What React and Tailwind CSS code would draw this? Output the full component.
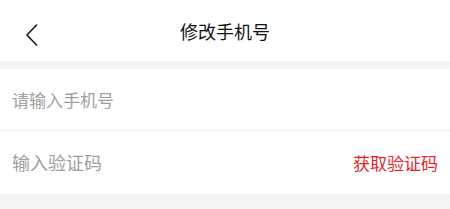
export default function App() {
  const font = { fontFamily: '"Noto Sans CJK SC", "Noto Sans", sans-serif' };
  return (
    <div className="w-[450px] h-[209px] bg-[#f5f5f5] flex flex-col" style={font}>
      <header className="h-[61px] bg-white flex items-center relative">
        <button className="absolute left-[22px] top-[20px] w-[20px] h-[30px] flex items-center justify-center">
          <svg width="14" height="24" viewBox="0 0 14 24" fill="none">
            <path d="M12 1.5 L2 12 L12 22.5" stroke="#111" strokeWidth="1.5" />
          </svg>
        </button>
        <h1 className="flex-1 text-center text-[18px] leading-none text-[#111] font-normal">修改手机号</h1>
      </header>
      <div className="mt-[8px] bg-white flex flex-col">
        <div className="h-[62px] flex items-center px-[12px] border-b border-[#eeeeee]">
          <span className="text-[17px] text-[#a0a0a0]">请输入手机号</span>
        </div>
        <div className="h-[63px] flex items-center justify-between px-[12px]">
          <span className="text-[18px] text-[#a0a0a0]">输入验证码</span>
          <span className="text-[17px] text-[#e4252b]">获取验证码</span>
        </div>
      </div>
    </div>
  );
}
